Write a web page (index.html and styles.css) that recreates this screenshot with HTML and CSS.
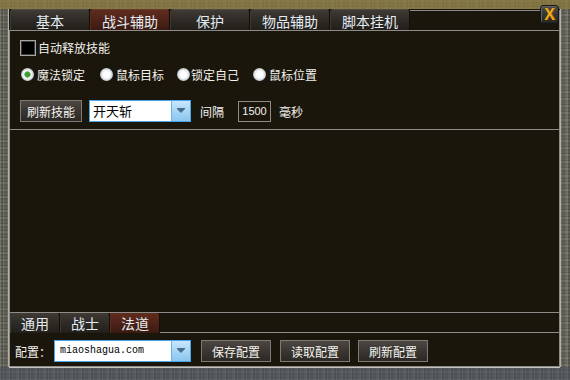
FILE: index.html
```html
<!DOCTYPE html>
<html lang="zh">
<head>
<meta charset="utf-8">
<title>战斗辅助</title>
<link rel="stylesheet" href="styles.css">
</head>
<body>
<div class="window">
  <div class="inner">
    <div class="tabbar">
      <div class="tab">基本</div>
      <div class="tab active">战斗辅助</div>
      <div class="tab">保护</div>
      <div class="tab">物品辅助</div>
      <div class="tab">脚本挂机</div>
      <div class="tabfill"></div>
    </div>
    <div class="panel-top">
      <div class="row-check"><span class="checkbox"></span><span class="txt">自动释放技能</span></div>
      <div class="row-radio">
        <span class="radio-item"><span class="radio checked"></span><span class="txt">魔法锁定</span></span>
        <span class="radio-item"><span class="radio"></span><span class="txt">鼠标目标</span></span>
        <span class="radio-item tight"><span class="radio"></span><span class="txt">锁定自己</span></span>
        <span class="radio-item"><span class="radio"></span><span class="txt">鼠标位置</span></span>
      </div>
      <div class="row-skill">
        <span class="btn btn-skill">刷新技能</span>
        <span class="combo combo-skill"><span class="combo-text">开天斩</span><span class="combo-arrow"><span class="tri"></span></span></span>
        <span class="lbl lbl-interval">间隔</span>
        <span class="num">1500</span>
        <span class="lbl lbl-ms">毫秒</span>
      </div>
    </div>
    <div class="panel-empty"></div>
    <div class="tabbar tabbar-bottom">
      <div class="tab small">通用</div>
      <div class="tab small">战士</div>
      <div class="tab small active">法道</div>
      <div class="tabfill"></div>
    </div>
    <div class="config-row">
      <span class="lbl lbl-config">配置：</span>
      <span class="combo combo-config"><span class="combo-text mono">miaoshagua.com</span><span class="combo-arrow"><span class="tri"></span></span></span>
      <span class="btn btn-cfg">保存配置</span>
      <span class="btn btn-cfg b2">读取配置</span>
      <span class="btn btn-cfg b3">刷新配置</span>
    </div>
  </div>
  <div class="close">X</div>
</div>
</body>
</html>
```

FILE: styles.css
```css
* { box-sizing: border-box; }
html, body { margin: 0; padding: 0; }
body {
  width: 570px;
  height: 380px;
  overflow: hidden;
  background: #5f5e55;
  font-family: "Noto Sans CJK SC", "Noto Sans", sans-serif;
  font-size: 12px;
  color: #f2f2ec;
}
.window {
  position: relative;
  width: 570px;
  height: 380px;
  padding: 9px 10px 13px 9px;
  background-color: #67665b;
  background-image:
    linear-gradient(180deg, rgba(140, 122, 60, 0.75) 0 9px, transparent 9px),
    linear-gradient(0deg, rgba(70, 78, 92, 0.55) 0 13px, transparent 13px),
    repeating-linear-gradient(90deg, rgba(255,255,255,.10) 0 1px, rgba(0,0,0,.14) 1px 3px, rgba(255,255,255,.06) 3px 4px, rgba(0,0,0,.08) 4px 7px, rgba(255,255,255,.04) 7px 9px),
    repeating-linear-gradient(0deg, rgba(255,255,255,.07) 0 2px, rgba(0,0,0,.12) 2px 3px, transparent 3px 5px, rgba(0,0,0,.06) 5px 7px);
}
.inner {
  display: flex;
  flex-direction: column;
  width: 551px;
  height: 358px;
  background: #1b160c;
  box-shadow: -1px 0 0 #b4b2a6, 1px 0 0 #b4b2a6, 0 1px 0 #c4c4c0;
}
.tabbar {
  display: flex;
  height: 21px;
  padding-left: 1px;
  background: #1b160c;
}
.tab {
  width: 80px;
  height: 21px;
  padding-top: 2px;
  text-align: center;
  font-size: 14px;
  line-height: 19px;
  color: #e4ecf4;
  border-top: 1px solid #4e4a44;
  border-left: 1px solid #3c3833;
  border-right: 1px solid #121009;
  border-radius: 3px 3px 0 0;
  background: linear-gradient(180deg, #3f3a34 0%, #302c27 45%, #221e19 100%);
}
.tab.active {
  border-top-color: #6a3a28;
  border-left-color: #5a2c1c;
  background: linear-gradient(180deg, #5e2c1c 0%, #51241a 45%, #3a1a10 100%);
}
.tabfill {
  flex: 1;
  margin-top: 1px;
  border-top: 1px solid #8e8c88;
  border-right: 1px solid #8e8c88;
}
.panel-top {
  display: flex;
  flex-direction: column;
  height: 100px;
  border: 1px solid #8e8c88;
  padding: 9px 0 0 0;
}
.row-check {
  display: flex;
  align-items: center;
  height: 15px;
  padding-left: 10px;
}
.checkbox {
  width: 16px;
  height: 16px;
  margin-right: 2px;
  border: 1px solid #a6a6a2;
  box-shadow: inset 0 0 0 1px #3c3c3a;
  background: #000;
}
.row-radio {
  display: grid;
  grid-template-columns: 79px 77px 76px auto;
  align-items: center;
  height: 16px;
  margin-top: 11px;
  padding-left: 11px;
}
.radio-item { display: flex; align-items: center; }
.radio {
  width: 13px;
  height: 13px;
  margin-right: 3px;
  border-radius: 50%;
  background: radial-gradient(circle at 50% 50%, #ffffff 0 3px, #f2f4f6 4px, #c8ced4 6px, #9aa2aa 7px);
}
.radio.checked {
  background: radial-gradient(circle at 50% 50%, #3c9a34 0 2px, #7ac070 3px, #ffffff 3.5px, #f2f4f6 4px, #c8ced4 6px, #9aa2aa 7px);
}
.radio-item.tight .radio { margin-right: 1px; }
.row-skill {
  display: flex;
  align-items: center;
  height: 22px;
  margin-top: 18px;
  padding-left: 10px;
}
.btn {
  display: inline-flex;
  align-items: center;
  justify-content: center;
  height: 22px;
  border: 1px solid #7e7a74;
  background: linear-gradient(180deg, #4c4742 0%, #3a3631 50%, #2c2823 100%);
  color: #f4f4f0;
  font-size: 12px;
}
.btn-skill { width: 62px; }
.combo {
  display: inline-flex;
  height: 22px;
  border: 1px solid #4aa6ea;
  background: #fff;
}
.combo-skill { width: 102px; margin-left: 7px; }
.combo-text {
  flex: 1;
  padding-left: 3px;
  line-height: 20px;
  color: #000;
  font-size: 13px;
}
.combo-text.mono {
  font-family: "Liberation Mono", "DejaVu Sans Mono", monospace;
  font-size: 10px;
  padding-left: 5px;
}
.combo-arrow {
  display: flex;
  align-items: center;
  justify-content: center;
  width: 19px;
  border-left: 1px solid #6ab4ea;
  background: linear-gradient(180deg, #c8e6fb 0%, #a8d6f6 50%, #8cc6f0 100%);
}
.tri {
  width: 0;
  height: 0;
  border-left: 4px solid transparent;
  border-right: 4px solid transparent;
  border-top: 4px solid #4a6e8a;
  box-shadow: 0 -1px 0 #4a6e8a;
}
.lbl { font-size: 12px; }
.lbl-interval { margin-left: 9px; }
.num {
  display: inline-flex;
  align-items: center;
  justify-content: center;
  width: 33px;
  height: 21px;
  margin-left: 14px;
  border: 1px solid #8c8c88;
  font-family: "Liberation Sans", Arial, sans-serif;
  font-size: 11px;
}
.lbl-ms { margin-left: 8px; }
.panel-empty {
  height: 182px;
  border-left: 1px solid #8e8c88;
  border-right: 1px solid #8e8c88;
}
.tabbar-bottom {
  height: 21px;
  border-left: 1px solid #8e8c88;
  border-right: 1px solid #8e8c88;
  border-top: 1px solid #8e8c88;
  padding-left: 0;
}
.tab.small {
  width: 50px;
  height: 20px;
  padding-top: 0;
  line-height: 20px;
  border-top: none;
  border-radius: 0 3px 0 0;
}
.tabbar-bottom .tabfill {
  margin-top: 19px;
  border-top: 1px solid #8e8c88;
  border-right: none;
}
.config-row {
  display: flex;
  align-items: center;
  height: 34px;
  padding: 3px 0 0 5px;
  border: 1px solid #8e8c88;
  border-top: none;
}
.lbl-config { width: 39px; font-size: 12px; }
.combo-config { width: 137px; }
.btn-cfg { width: 70px; margin-left: 10px; }
.btn-cfg.b2 { margin-left: 9px; }
.btn-cfg.b3 { margin-left: 8px; }
.close {
  position: absolute;
  left: 540px;
  top: 5px;
  width: 19px;
  height: 19px;
  display: flex;
  align-items: center;
  justify-content: center;
  border-radius: 3px;
  border: 1px solid #161616;
  background: linear-gradient(180deg, #4e4e4c 0%, #353533 50%, #242422 100%);
  box-shadow: inset 1px 1px 0 #64645f;
  font-family: "Liberation Sans", Arial, sans-serif;
  font-weight: bold;
  font-size: 16px;
  line-height: 1;
  color: #eeaa22;
  text-shadow: 0 1px 0 #4a3006, 1px 0 0 #8a5a10;
}
```
